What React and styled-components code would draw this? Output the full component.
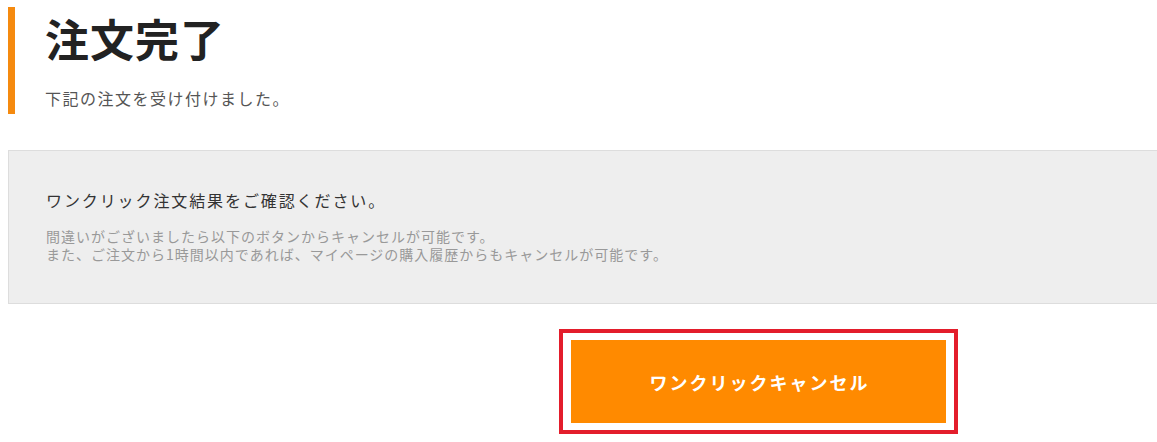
import React from "react";
import styled, { createGlobalStyle } from "styled-components";

const GlobalStyle = createGlobalStyle`
  html, body {
    margin: 0;
    padding: 0;
    background: #ffffff;
    overflow: hidden;
  }
  body {
    font-family: "Noto Sans CJK JP", "Noto Sans", sans-serif;
    color: #333333;
  }
`;

const Page = styled.main`
  width: 1501px;
  padding: 7px 0 0 8px;
`;

const Header = styled.header`
  border-left: 7px solid #f58a0f;
  padding: 0 0 3px 30px;
`;

const Title = styled.h1`
  margin: 0;
  font-size: 44px;
  line-height: 62px;
  font-weight: 700;
  letter-spacing: 1px;
  color: #222222;
`;

const Lead = styled.p`
  margin: 17px 0 0;
  font-size: 16px;
  line-height: 25px;
  letter-spacing: 1.5px;
  color: #555555;
`;

const Notice = styled.section`
  margin-top: 36px;
  background: #eeeeee;
  border: 1px solid #dddddd;
  border-right: none;
  padding: 37px 37px 40px;
`;

const NoticeTitle = styled.p`
  margin: 0;
  font-size: 16px;
  line-height: 24px;
  letter-spacing: 1.9px;
  color: #333333;
`;

const NoticeText = styled.p`
  margin: 15px 0 0;
  font-size: 14px;
  line-height: 18px;
  letter-spacing: 1px;
  color: #999999;
`;

const Actions = styled.div`
  display: flex;
  justify-content: center;
  margin-top: 25px;
`;

const Highlight = styled.div`
  border: 4px solid #e31d2b;
  padding: 7px 8px;
  background: #ffffff;
`;

const CancelButton = styled.button`
  display: flex;
  align-items: center;
  justify-content: center;
  width: 375px;
  height: 83px;
  border: none;
  background: #ff8a00;
  color: #ffffff;
  font-family: "Noto Sans CJK JP", "Noto Sans", sans-serif;
  font-size: 18px;
  font-weight: 700;
  letter-spacing: 2px;
  cursor: pointer;
  padding: 0 0 0 2px;
`;

export default function App() {
  return (
    <>
      <GlobalStyle />
      <Page>
        <Header>
          <Title>注文完了</Title>
          <Lead>下記の注文を受け付けました。</Lead>
        </Header>
        <Notice>
          <NoticeTitle>ワンクリック注文結果をご確認ください。</NoticeTitle>
          <NoticeText>
            間違いがございましたら以下のボタンからキャンセルが可能です。
            <br />
            また、ご注文から1時間以内であれば、マイページの購入履歴からもキャンセルが可能です。
          </NoticeText>
        </Notice>
        <Actions>
          <Highlight>
            <CancelButton type="button">ワンクリックキャンセル</CancelButton>
          </Highlight>
        </Actions>
      </Page>
    </>
  );
}
